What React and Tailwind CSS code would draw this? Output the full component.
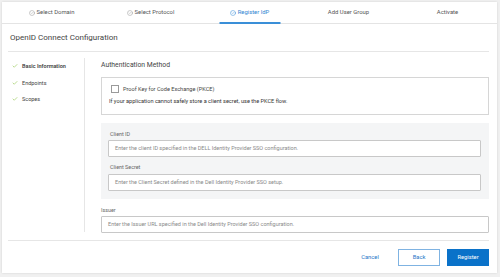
import React from 'react'
import { CircleCheck, Check } from 'lucide-react'

const TABS = [
  { label: 'Select Domain', done: true },
  { label: 'Select Protocol', done: true },
  { label: 'Register IdP', done: true, active: true },
  { label: 'Add User Group' },
  { label: 'Activate' },
]

const STEPS = ['Basic Information', 'Endpoints', 'Scopes']

const Field = ({ placeholder, className = '' }) => (
  <div className={`h-[17px] bg-white border border-[#c8c8c8] rounded-[1px] flex items-center pl-[6px] text-[5.5px] text-[#8a8a8a] ${className}`}>
    {placeholder}
  </div>
)

export default function App() {
  return (
    <div className="w-[500px] h-[277px] bg-[#f0f0f0] pt-[2px] pl-[2px] font-['Roboto',sans-serif] overflow-hidden">
      <div className="w-[495px] h-[271px] bg-white shadow-[0_0_2px_rgba(0,0,0,0.12)] flex flex-col">
        {/* wizard tabs */}
        <div className="h-[22px] flex border-b border-[#e4e4e4]">
          {TABS.map(tab => (
            <div key={tab.label} className="flex-1 relative flex items-center justify-center gap-[2px]">
              {tab.done && (
                <CircleCheck size={6} strokeWidth={2} className={tab.active ? 'text-[#3a8fd8]' : 'text-[#9a9a9a]'} />
              )}
              <span className={`text-[5.9px] ${tab.active ? 'text-[#2f86d2]' : 'text-[#555]'}`}>{tab.label}</span>
              {tab.active && <div className="absolute bottom-[-1px] left-1/2 -translate-x-1/2 w-[61px] h-[2px] bg-[#3a8fd8]" />}
            </div>
          ))}
        </div>

        <div className="ml-[6px] mr-[8px] flex flex-col">
          {/* title */}
          <div className="h-[28px] flex items-center pl-[2px] border-b border-[#e6e6e6]">
            <h1 className="text-[8px] text-[#444] leading-none">OpenID Connect Configuration</h1>
          </div>

          {/* body */}
          <div className="h-[189px] flex border-b border-[#e6e6e6]">
            <div className="w-[77px] mt-[6px] h-[174px] border-r border-[#e6e6e6] flex flex-col gap-[8.5px] pt-[4px] pl-[4px]">
              {STEPS.map((s, i) => (
                <div key={s} className="flex items-center gap-[4px] leading-[8px]">
                  <Check size={6} strokeWidth={2.2} className="text-[#86bf3a]" />
                  <span className={`text-[5.5px] text-[#444] ${i === 0 ? 'font-semibold' : ''}`}>{s}</span>
                </div>
              ))}
            </div>

            <div className="flex-1 pl-[16px] pt-[8px] flex flex-col">
              <h2 className="text-[6.8px] leading-[10px] text-[#444]">Authentication Method</h2>

              <div className="mt-[7px] h-[38px] border border-[#d6d6d6] flex flex-col pt-[7px]">
                <div className="flex items-center gap-[4px] pl-[9px] h-[8px]">
                  <div className="w-[8px] h-[8px] border border-[#9a9a9a] bg-white" />
                  <span className="text-[5.6px] text-[#444]">Proof Key for Code Exchange (PKCE)</span>
                </div>
                <p className="mt-[4px] pl-[7px] text-[5.6px] leading-[8px] text-[#333]">
                  If your application cannot safely store a client secret, use the PKCE flow.
                </p>
              </div>

              <div className="mt-[8px] h-[76px] bg-[#f4f5f6] pl-[7px] pr-[8px] pt-[7px] flex flex-col">
                <label className="pl-[2px] text-[5.4px] leading-[8px] text-[#666]">Client ID</label>
                <Field className="mt-[2px]" placeholder="Enter the client ID specified in the DELL Identity Provider SSO configuration." />
                <label className="mt-[6px] pl-[2px] text-[5.4px] leading-[8px] text-[#666]">Client Secret</label>
                <Field className="mt-[3px]" placeholder="Enter the Client Secret defined in the Dell Identity Provider SSO setup." />
              </div>

              <label className="mt-[7px] text-[5.4px] leading-[8px] text-[#666]">Issuer</label>
              <Field className="mt-[2px]" placeholder="Enter the Issuer URL specified in the Dell Identity Provider SSO configuration." />
            </div>
          </div>

          {/* footer */}
          <div className="pt-[8px] flex justify-end gap-[7px]">
            <button className="w-[42px] h-[17px] text-[5.8px] text-[#1f78c8]">Cancel</button>
            <button className="w-[42px] h-[17px] border border-[#7fb3e2] bg-white text-[5.8px] text-[#1f78c8]">Back</button>
            <button className="w-[42px] h-[17px] bg-[#0a72c9] text-[5.8px] text-white">Register</button>
          </div>
        </div>
      </div>
    </div>
  )
}
